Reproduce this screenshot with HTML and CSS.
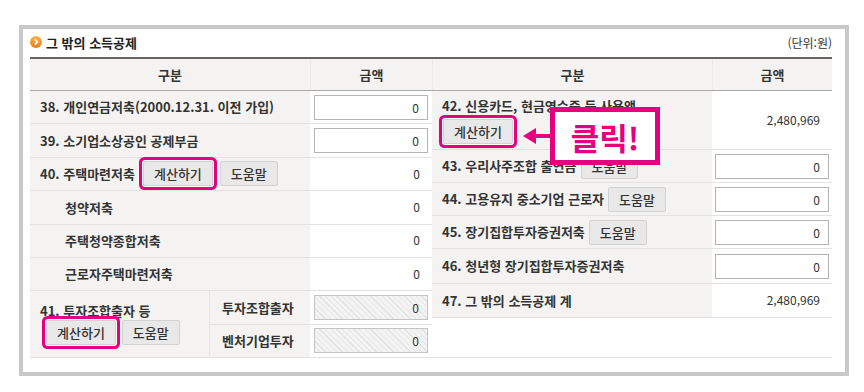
FILE: index.html
```html
<!DOCTYPE html>
<html lang="ko">
<head>
<meta charset="UTF-8">
<title>그 밖의 소득공제</title>
<link rel="stylesheet" href="styles.css">
</head>
<body>
<div class="frame">
  <div class="title-bar">
    <h2 class="title">
      <svg class="bullet" width="12" height="12" viewBox="0 0 12 12">
        <defs>
          <linearGradient id="og" x1="0" y1="0" x2="0" y2="1">
            <stop offset="0" stop-color="#fbb34a"/>
            <stop offset="1" stop-color="#e67e16"/>
          </linearGradient>
        </defs>
        <circle cx="6" cy="6" r="6" fill="url(#og)"/>
        <path d="M4.8 3.4 L7.4 6 L4.8 8.6" fill="none" stroke="#fff" stroke-width="1.7"/>
      </svg>
      그 밖의 소득공제
    </h2>
    <span class="unit">(단위:원)</span>
  </div>

  <div class="sheet">
    <div class="head">
      <div class="th">구분</div>
      <div class="th">금액</div>
      <div class="th">구분</div>
      <div class="th">금액</div>
    </div>

    <div class="body">
      <!-- 왼쪽 38 ~ 41 -->
      <div class="grid-left">
        <div class="lbl wide">38. 개인연금저축(2000.12.31. 이전 가입)</div>
        <div class="val center"><input class="amt" type="text" value="0"></div>

        <div class="lbl wide">39. 소기업소상공인 공제부금</div>
        <div class="val center"><input class="amt" type="text" value="0"></div>

        <div class="lbl wide">40. 주택마련저축
          <button class="btn hl btn-calc40">계산하기</button>
          <button class="btn btn-help40">도움말</button>
        </div>
        <div class="val">0</div>

        <div class="lbl wide sub">청약저축</div>
        <div class="val">0</div>

        <div class="lbl wide sub">주택청약종합저축</div>
        <div class="val">0</div>

        <div class="lbl wide sub">근로자주택마련저축</div>
        <div class="val">0</div>

        <div class="lbl stack r41">
          <span>41. 투자조합출자 등</span>
          <div class="btns41">
            <button class="btn hl">계산하기</button>
            <button class="btn">도움말</button>
          </div>
        </div>
        <div class="lbl sub2">투자조합출자</div>
        <div class="val center"><input class="amt off" type="text" value="0" disabled></div>

        <div class="lbl sub2">벤처기업투자</div>
        <div class="val center"><input class="amt off" type="text" value="0" disabled></div>
      </div>

      <!-- 오른쪽 42 ~ 47 -->
      <div class="grid-right">
        <div class="lbl stack r42">
          <span>42. 신용카드, 현금영수증 등 사용액</span>
          <button class="btn hl">계산하기</button>
        </div>
        <div class="val">2,480,969</div>

        <div class="lbl">43. 우리사주조합 출연금 <button class="btn">도움말</button></div>
        <div class="val center"><input class="amt" type="text" value="0"></div>

        <div class="lbl">44. 고용유지 중소기업 근로자 <button class="btn">도움말</button></div>
        <div class="val center"><input class="amt" type="text" value="0"></div>

        <div class="lbl">45. 장기집합투자증권저축 <button class="btn">도움말</button></div>
        <div class="val center"><input class="amt" type="text" value="0"></div>

        <div class="lbl">46. 청년형 장기집합투자증권저축</div>
        <div class="val center"><input class="amt" type="text" value="0"></div>

        <div class="lbl">47. 그 밖의 소득공제 계</div>
        <div class="val">2,480,969</div>

        <div class="empty"></div>
      </div>
    </div>

    <!-- 안내 표시 -->
    <svg class="arrow" width="30" height="18" viewBox="0 0 30 18">
      <polygon points="0,9 13,1 13,17" fill="#e4007f"/>
      <rect x="12" y="7" width="18" height="4" fill="#e4007f"/>
    </svg>
    <div class="callout">클릭!</div>
  </div>
</div>
</body>
</html>
```

FILE: styles.css
```css
body{ margin:0; background:#fff; font-family:"Noto Sans CJK KR","Noto Sans",sans-serif; color:#333; font-size:13px; line-height:1.2;}

.frame{ box-sizing:border-box; width:830px; height:351px; margin:25px 0 0 19px; border:4px solid #c8c8c8; padding:0 13px 0 7px; background:#fff;}

.title-bar{ height:28px; display:flex; align-items:center; justify-content:space-between;}
.title{ margin:0; font-size:13px; font-weight:bold; color:#222; display:flex; align-items:center; gap:4px;}
.bullet{ display:block; margin-top:-3px;}
.unit{ font-size:12px; color:#333;}

.sheet{ position:relative; border-top:2px solid #666;}
.head{ display:grid; grid-template-columns:280px 122px 280px 120px; height:31px; background:#f4f3f1; border-bottom:1px solid #aaa;}
.th{ display:flex; align-items:center; justify-content:center; font-weight:bold; color:#333; border-left:1px solid #ebebea;}
.th:first-child{ border-left:none;}

.body{ display:flex;}
.grid-left{ display:grid; grid-template-columns:180px 100px 122px; grid-template-rows:repeat(8,1fr); height:267px; width:402px;}
.grid-right{ display:grid; grid-template-columns:280px 120px; grid-template-rows:59px 33px 33px 33px 35px 34px 40px; height:267px; width:400px;}

.lbl{ box-sizing:border-box; background:#f4f3f1; border-bottom:1px solid #e2e2e2; padding-left:10px; display:flex; align-items:center; font-weight:bold; color:#333; white-space:nowrap;}
.wide{ grid-column:span 2;}
.sub{ padding-left:35px;}
.sub2{ padding-left:12px;}
.stack{ flex-direction:column; align-items:flex-start; justify-content:center;}
.r41{ grid-row:span 2; border-right:1px solid #e6e6e6;}
.r42{ gap:5px; padding-top:2px;}
.r42 .btn{ margin-left:1px;}
.btns41{ display:flex; gap:6px; margin:1px 0 0 6px;}

.val{ box-sizing:border-box; background:#fff; border-bottom:1px solid #e2e2e2; display:flex; align-items:center; justify-content:flex-end; padding-right:12px; font-size:12px; color:#333;}
.val.center{ justify-content:center; padding-right:0;}
.empty{ grid-column:span 2; border-bottom:1px solid #e2e2e2;}

.amt{ box-sizing:border-box; width:114px; height:25px; border:1px solid #b4b4b4; padding:0 8px; text-align:right; font-family:inherit; font-size:12px; color:#333; background:#fff;}
.amt.off{ border-color:#c4c4c4; background:repeating-linear-gradient(45deg,#f3f3f3 0,#f3f3f3 3px,#e3e3e3 3px,#e3e3e3 4px);}

.btn{ box-sizing:border-box; height:25px; padding:0 10px; border:1px solid #d2d2d2; border-radius:2px; background:#e8e8e8; font-family:inherit; font-size:13px; font-weight:500; color:#333; line-height:23px; margin-left:4px;}
.btns41 .btn{ margin-left:0;}
.hl{ box-shadow:0 0 0 1px #fff,0 0 0 4px #e4007f;}
.btn-calc40{ margin-left:8px;}
.btn-help40{ margin-left:7px;}

.arrow{ position:absolute; left:493px; top:68px;}
.callout{ position:absolute; left:520px; top:48px; box-sizing:border-box; width:110px; height:58px; border:5px solid #e4007f; background:#fff; color:#e4007f; font-size:31px; font-weight:bold; display:flex; align-items:center; justify-content:center; line-height:1;}
```
